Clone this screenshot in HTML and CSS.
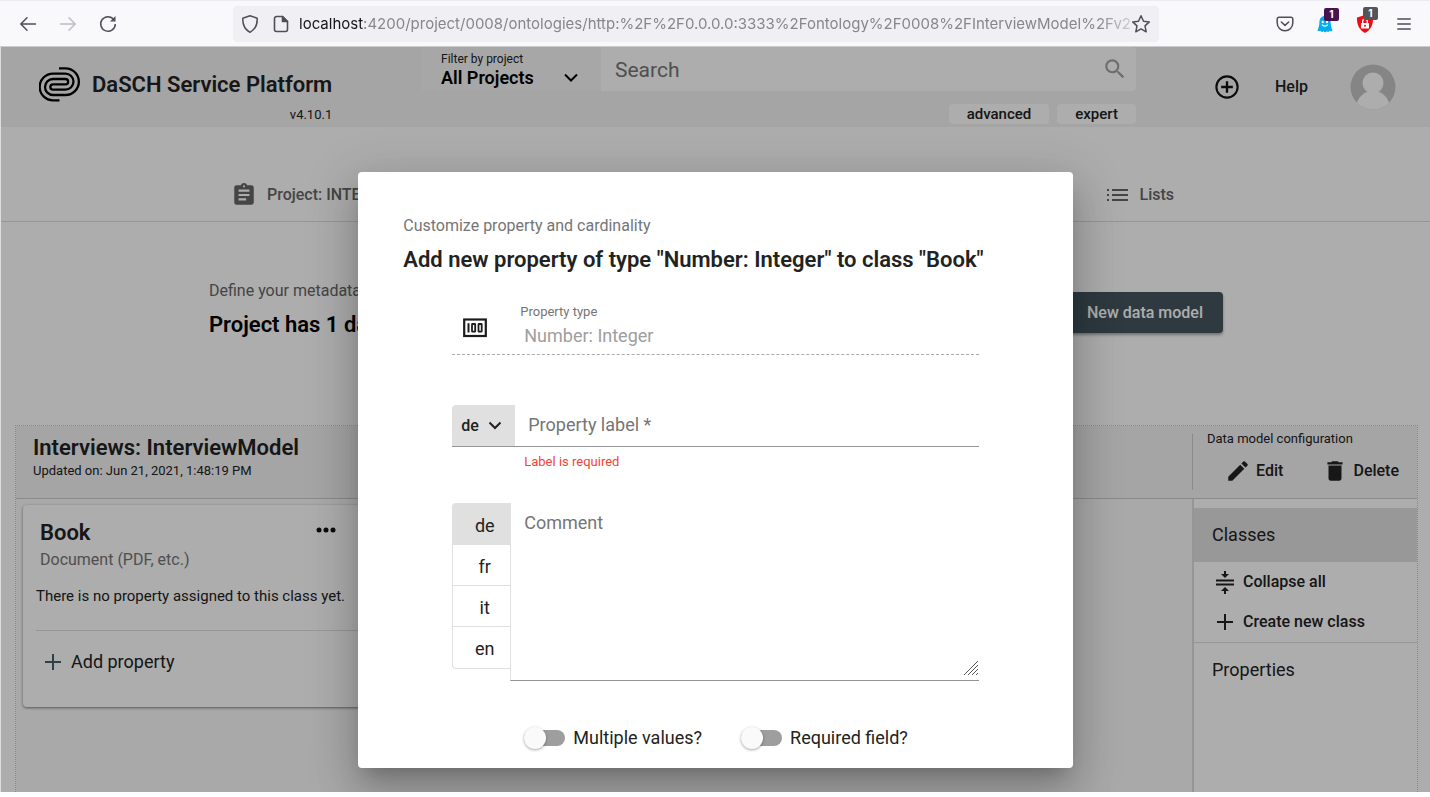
FILE: index.html
```
<!DOCTYPE html>
<html lang="en">
<head>
    <meta charset="UTF-8">
    <meta name="viewport" content="width=device-width, initial-scale=1.0">
    <title>DaSCH Service Platform</title>
    <link rel="stylesheet" href="styles.css">
</head>
<body>

<!-- Browser toolbar -->
<div class="browser">
    <div class="nav-buttons">
        <button class="icon-btn" aria-label="Back">
            <svg width="18" height="18" viewBox="0 0 18 18" fill="none" stroke="#4f4e59" stroke-width="1.5" stroke-linecap="round" stroke-linejoin="round"><path d="M16.500 9H2M8 2.800L1.800 9 8 15.200"/></svg>
        </button>
        <button class="icon-btn" aria-label="Forward">
            <svg width="18" height="18" viewBox="0 0 18 18" fill="none" stroke="#bdbdc2" stroke-width="1.5" stroke-linecap="round" stroke-linejoin="round"><path d="M1.500 9H16M10 2.800L16.200 9 10 15.200"/></svg>
        </button>
        <button class="icon-btn" aria-label="Reload">
            <svg width="18" height="18" viewBox="0 0 18 18" fill="none" stroke="#4f4e59" stroke-width="1.5"><path d="M14.800 4.500A7.300 7.300 0 1 0 16.300 9"/><path d="M16.500 1v5.500H11z" fill="#4f4e59" stroke="none"/></svg>
        </button>
    </div>
    <div class="url-bar">
        <svg width="18" height="20" viewBox="0 0 18 20" fill="none" stroke="#4f4e59" stroke-width="1.500" stroke-linejoin="round"><path d="M9 1.800L16.200 4.200C16.500 10 14 15.500 9 18.300 4 15.500 1.500 10 1.800 4.200z"/></svg>
        <svg width="16" height="18" viewBox="0 0 16 18" fill="none" stroke="#4f4e59" stroke-width="1.600" stroke-linejoin="round"><path d="M3.500 1.500h6l5 5v8a2 2 0 0 1-2 2h-9a2 2 0 0 1-2-2v-11a2 2 0 0 1 2-2z"/><path d="M9.500 1.500v5h5z" fill="#4f4e59"/></svg>
        <p class="url"><span class="host">localhost</span>:4200/project/0008/ontologies/http:%2F%2F0.0.0.0:3333%2Fontology%2F0008%2FInterviewModel%2Fv2</p>
        <button class="icon-btn" aria-label="Bookmark">
            <svg width="20" height="20" viewBox="0 0 20 20" fill="none" stroke="#4f4e59" stroke-width="1.500" stroke-linejoin="round"><path d="M10 1.800l2.500 5.400 5.800.7-4.300 4 1.200 5.900L10 14.900l-5.200 2.900L6 11.900l-4.300-4 5.800-.7z"/></svg>
        </button>
    </div>
    <div class="extensions">
        <button class="icon-btn" aria-label="Pocket">
            <svg width="18" height="16" viewBox="0 0 18 16" fill="none" stroke="#4f4e59" stroke-width="1.500" stroke-linecap="round" stroke-linejoin="round"><path d="M3 1.200h12a1.800 1.800 0 0 1 1.800 1.800v4a7.800 7.800 0 0 1-15.600 0V3A1.800 1.800 0 0 1 3 1.200zM5.300 6L9 9.400 12.700 6"/></svg>
        </button>
        <button class="icon-btn" aria-label="Ghostery">
            <svg width="16" height="18" viewBox="0 0 16 18"><path d="M8 1C4.500 1 2.500 3.500 2.400 7c-.1 4-.9 6-1.900 8.500 1 1 2 .8 2.800 0 .8 1.800 2.300 1.800 3.200.7.900 1.300 2.400 1.300 3.200 0 .9 1.200 2.400 1 3.100-.6.900.7 1.900.8 2.700-.3-1.200-2.400-1.700-4.500-1.900-8.300C13.400 3.500 11.500 1 8 1z" fill="#00aef0"/><circle cx="5.700" cy="7" r="1.200" fill="#fff"/><circle cx="10" cy="7" r="1.200" fill="#fff"/><path d="M5 9.600c1.500 2 4.300 2 5.800 0" fill="none" stroke="#fff" stroke-width="1.200"/></svg>
            <span class="badge purple">1</span>
        </button>
        <button class="icon-btn" aria-label="Ad blocker">
            <svg width="18" height="20" viewBox="0 0 18 20"><path d="M9 1l8 2.600C17.300 10.500 15 16 9 19 3 16 .7 10.500 1 3.600z" fill="#f00c13"/><rect x="5" y="9" width="8" height="5.500" rx=".6" fill="#fff"/><path d="M6.700 9V7.300a2.300 2.300 0 0 1 4.600 0V9" fill="none" stroke="#fff" stroke-width="1.300"/><circle cx="9" cy="11.700" r="1" fill="#f00c13"/></svg>
            <span class="badge grey">1</span>
        </button>
        <button class="icon-btn" aria-label="Menu">
            <svg width="14" height="14" viewBox="0 0 14 14" stroke="#4f4e59" stroke-width="1.500" stroke-linecap="round"><path d="M.8 2h12.400M.8 7h12.400M.8 12h12.400"/></svg>
        </button>
    </div>
</div>

<div class="app">

    <!-- Header -->
    <header class="header">
        <div class="brand">
            <svg class="logo" width="41" height="36" viewBox="0 0 41 36" fill="none" stroke="#000" stroke-width="2.300"><path d="M20 1.300H26.500A13.350 13.350 0 0 1 26.500 28H14A8 8 0 0 1 14 12H26.500A2.650 2.650 0 0 1 26.500 17.300H14"/><path d="M20.500 33.300H14A13.350 13.350 0 0 1 14 6.600H26.500A8 8 0 0 1 26.500 22.600H14A2.650 2.650 0 0 1 14 17.300"/></svg>
            <div class="brand-text">
                <h1>DaSCH Service Platform</h1>
                <p>v4.10.1</p>
            </div>
        </div>
        <div class="search-area">
            <div class="search-row">
                <button class="filter">
                    <span class="filter-text"><small>Filter by project</small><strong>All Projects</strong></span>
                    <svg width="16" height="10" viewBox="0 0 16 10" fill="none" stroke="#000" stroke-width="2"><path d="M2 1.500l6 6 6-6"/></svg>
                </button>
                <div class="search-box">
                    <input type="text" placeholder="Search" aria-label="Search">
                    <button class="icon-btn" aria-label="Search">
                        <svg width="26" height="26" viewBox="0 0 24 24" fill="#a3a3a3"><path d="M15.500 14h-.79l-.28-.27A6.470 6.470 0 0 0 16 9.500 6.500 6.500 0 1 0 9.500 16c1.610 0 3.090-.59 4.230-1.570l.27.28v.79l5 4.990L20.490 19l-4.990-5zm-6 0C7.010 14 5 11.990 5 9.500S7.010 5 9.500 5 14 7.010 14 9.500 11.990 14 9.500 14z"/></svg>
                    </button>
                </div>
            </div>
            <div class="search-modes">
                <button>advanced</button>
                <button>expert</button>
            </div>
        </div>
        <div class="header-actions">
            <button class="icon-btn" aria-label="Add">
                <svg width="28" height="28" viewBox="0 0 24 24" fill="#111"><path d="M13 7h-2v4H7v2h4v4h2v-4h4v-2h-4V7zm-1-5a10 10 0 1 0 0 20 10 10 0 0 0 0-20zm0 18.200a8.200 8.200 0 1 1 0-16.400 8.200 8.200 0 0 1 0 16.400z"/></svg>
            </button>
            <a class="help" href="#">Help</a>
            <button class="icon-btn" aria-label="Account">
                <svg width="46" height="46" viewBox="0 0 46 46"><defs><clipPath id="avatar"><circle cx="23" cy="23" r="22.500"/></clipPath></defs><g clip-path="url(#avatar)"><path fill="#c4c4c4" d="M0 0h46v46H0z"/><circle cx="23" cy="19" r="10.500" fill="#fff"/><path d="M6 42c2-9 8-15 17-15s15 6 17 15l-5 6H11z" fill="#fff"/></g></svg>
            </button>
        </div>
    </header>

    <!-- Project tabs -->
    <nav class="tabs">
        <a href="#">
            <svg width="26" height="26" viewBox="0 0 24 24" fill="#666"><path d="M19 3h-4.180C14.400 1.840 13.300 1 12 1s-2.400.84-2.820 2H5c-1.100 0-2 .9-2 2v14c0 1.100.9 2 2 2h14c1.100 0 2-.9 2-2V5c0-1.100-.9-2-2-2zm-7 0c.55 0 1 .45 1 1s-.45 1-1 1-1-.45-1-1 .45-1 1-1zm2 14H7v-2h7v2zm3-4H7v-2h10v2zm0-4H7V7h10v2z"/></svg>
            Project: INTERVIEWS
        </a>
        <a href="#">
            <svg width="22" height="14" viewBox="0 0 22 14" fill="#666"><path d="M0 1h2v2H0zM0 6h2v2H0zM0 11h2v2H0zM5 1h16v2H5zM5 6h16v2H5zM5 11h16v2H5z"/></svg>
            Lists
        </a>
    </nav>

    <section class="intro">
        <div>
            <p>Define your metadata</p>
            <h2>Project has 1 data model</h2>
        </div>
        <button class="primary">New data model</button>
    </section>

    <!-- Data model editor -->
    <main class="editor">
        <div class="editor-header">
            <div class="model-title">
                <h3>Interviews: InterviewModel</h3>
                <p>Updated on: Jun 21, 2021, 1:48:19 PM</p>
            </div>
            <div class="model-config">
                <p>Data model configuration</p>
                <div class="config-buttons">
                    <button>
                        <svg width="26" height="26" viewBox="0 0 24 24" fill="#222"><path d="M3 17.250V21h3.750L17.810 9.940l-3.750-3.750L3 17.250zM20.710 7.040a1 1 0 0 0 0-1.410l-2.340-2.340a1 1 0 0 0-1.410 0l-1.830 1.830 3.750 3.750 1.830-1.830z"/></svg>
                        Edit
                    </button>
                    <button>
                        <svg width="26" height="26" viewBox="0 0 24 24" fill="#222"><path d="M6 19c0 1.100.9 2 2 2h8c1.100 0 2-.9 2-2V7H6v12zM19 4h-3.500l-1-1h-5l-1 1H5v2h14V4z"/></svg>
                        Delete
                    </button>
                </div>
            </div>
        </div>
        <div class="editor-body">
            <div class="canvas">
                <article class="class-card">
                    <div class="card-head">
                        <div>
                            <h3>Book</h3>
                            <p>Document (PDF, etc.)</p>
                        </div>
                        <button class="icon-btn" aria-label="More">
                            <svg width="20" height="6" viewBox="0 0 20 6" fill="#111"><circle cx="3" cy="3" r="2.500"/><circle cx="10" cy="3" r="2.500"/><circle cx="17" cy="3" r="2.500"/></svg>
                        </button>
                    </div>
                    <p class="empty">There is no property assigned to this class yet.</p>
                    <button class="add-property">
                        <svg width="18" height="18" viewBox="0 0 18 18" stroke="#44606e" stroke-width="2"><path d="M9 1v16M1 9h16"/></svg>
                        Add property
                    </button>
                </article>
            </div>
            <aside class="sidebar">
                <h4 class="active">Classes</h4>
                <button>
                    <svg width="22" height="24" viewBox="0 0 22 24" fill="#222"><path d="M2 9.500h18v2H2zM2 13.500h18v2H2zM10 1h2v3h3l-4 4-4-4h3zM10 24h2v-3h3l-4-4-4 4h3z"/></svg>
                    Collapse all
                </button>
                <button>
                    <svg width="22" height="24" viewBox="0 0 22 24" stroke="#222" stroke-width="2"><path d="M11 4v16M3 12h16"/></svg>
                    Create new class
                </button>
                <h4 class="properties">Properties</h4>
            </aside>
        </div>
    </main>

    <!-- Add property dialog -->
    <div class="backdrop">
        <form class="dialog" role="dialog" aria-labelledby="dialog-title">
            <p class="subtitle">Customize property and cardinality</p>
            <h2 id="dialog-title">Add new property of type "Number: Integer" to class "Book"</h2>

            <div class="fields">
                <div class="type-field">
                    <svg width="24" height="20" viewBox="0 0 24 20" fill="none" stroke="#1c1c1c"><rect x="1.200" y="1.500" width="21.600" height="16.500" stroke-width="2.200"/><path d="M5.500 5.200v9.300" stroke-width="2"/><rect x="9" y="6" width="3.200" height="7.700" rx=".5" stroke-width="1.800"/><rect x="15.500" y="6" width="3.200" height="7.700" rx=".5" stroke-width="1.800"/></svg>
                    <div class="type-value">
                        <label for="prop-type">Property type</label>
                        <input type="text" id="prop-type" value="Number: Integer" disabled>
                    </div>
                </div>

                <div class="label-field">
                    <button type="button" class="lang">de
                        <svg width="14" height="9" viewBox="0 0 14 9" fill="none" stroke="#222" stroke-width="2"><path d="M1.500 1.500L7 7l5.500-5.500"/></svg>
                    </button>
                    <input type="text" placeholder="Property label *" aria-label="Property label">
                </div>
                <p class="error">Label is required</p>

                <div class="comment-field">
                    <div class="lang-list">
                        <button type="button" class="selected">de</button>
                        <button type="button">fr</button>
                        <button type="button">it</button>
                        <button type="button">en</button>
                    </div>
                    <div class="comment-box">
                        <textarea placeholder="Comment" aria-label="Comment"></textarea>
                        <svg class="grip" width="16" height="16" viewBox="0 0 16 16" stroke="#555" stroke-width="1"><path d="M1 15L15 1M5 15L15 5M9 15l6-6M13 15l2-2"/></svg>
                    </div>
                </div>

                <div class="toggles">
                    <label><input type="checkbox">Multiple values?</label>
                    <label><input type="checkbox">Required field?</label>
                </div>
            </div>
        </form>
    </div>
</div>

</body>
</html>
```
FILE: styles.css
```
* {
    box-sizing: border-box;
}
body {
    margin: 0;
    height: 100vh;
    padding-bottom: 5px;
    display: flex;
    flex-direction: column;
    font-family: Roboto, sans-serif;
    font-size: 16px;
    line-height: 20px;
    color: #222;
    background: #fff;
    overflow: hidden;
}
h1, h2, h3, h4, p {
    margin: 0;
    font-weight: 600;
}
p {
    font-weight: 400;
}
button, input, textarea {
    font: inherit;
    color: inherit;
    border: none;
    background: none;
    padding: 0;
}
a {
    color: inherit;
    text-decoration: none;
}
svg {
    display: block;
    flex: none;
}
.icon-btn {
    position: relative;
}

/* browser toolbar */
.browser {
    display: flex;
    align-items: center;
    height: 47px;
    padding: 0 19px;
    background: #f9f9fb;
    border-top: 1px solid #ececf0;
    border-bottom: 1px solid #ccc;
}
.nav-buttons {
    display: flex;
    flex: none;
    gap: 22px;
    width: 214px;
}
.url-bar {
    display: flex;
    align-items: center;
    flex: 1;
    min-width: 0;
    height: 36px;
    padding: 0 8px;
    background: #f0f0f4;
    border-radius: 4px;
}
.url-bar svg + svg {
    margin: 0 10px 0 14px;
}
.url {
    flex: 1;
    min-width: 0;
    overflow: hidden;
    white-space: nowrap;
    font-family: Inter, sans-serif;
    font-size: 15px;
    color: #86868b;
    mask-image: linear-gradient(to right, #000 96%, rgba(0, 0, 0, .3));
}
.host {
    color: #15141a;
}
.extensions {
    display: flex;
    flex: none;
    align-items: center;
    justify-content: flex-end;
    gap: 23px;
    width: 252px;
}
.badge {
    position: absolute;
    top: -7px;
    left: 7px;
    width: 15px;
    height: 13px;
    border-radius: 2px;
    color: #fff;
    font: bold 10px/13px Inter, sans-serif;
    text-align: center;
}
.purple {
    background: #45134f;
}
.grey {
    background: #555;
}

/* application */
.app {
    position: relative;
    flex: 1;
    min-height: 0;
    display: flex;
    flex-direction: column;
    background: #fff;
    border-left: 1px solid #ddd;
    overflow: hidden;
}
.header {
    display: flex;
    height: 80px;
    flex: none;
    background: #f4f4f4;
}
.brand {
    display: flex;
    gap: 12px;
    padding: 20px 0 0 38px;
    width: 420px;
}
.brand-text h1 {
    font-size: 22px;
    line-height: 35px;
}
.brand-text p {
    font-size: 13px;
    line-height: 26px;
    text-align: right;
}
.search-area {
    flex: 1;
}
.search-row {
    display: flex;
    height: 44px;
}
.filter {
    display: flex;
    justify-content: space-between;
    align-items: center;
    width: 180px;
    padding: 4px 22px 0 20px;
    text-align: left;
    background: #f7f7f7;
    border-radius: 4px;
}
.filter svg {
    margin-top: 14px;
}
.filter small {
    display: block;
    font-size: 12px;
    line-height: 14px;
}
.filter strong {
    display: block;
    font-size: 18px;
    font-weight: 600;
    line-height: 24px;
    color: #000;
}
.search-box {
    display: flex;
    flex: 1;
    align-items: center;
    padding: 0 8px 0 14px;
    background: #fff;
    border-radius: 0 4px 4px 0;
}
.search-box input {
    flex: 1;
    padding-top: 2px;
    font-size: 21px;
}
::placeholder {
    color: #757575;
    opacity: 1;
}
.search-modes {
    display: flex;
    justify-content: flex-end;
    gap: 8px;
    padding-top: 13px;
}
.search-modes button {
    height: 20px;
    padding: 0 18px;
    font-size: 15px;
    font-weight: 500;
    background: #fff;
    border-radius: 4px;
}
.header-actions {
    display: flex;
    align-items: center;
    justify-content: flex-end;
    gap: 34px;
    width: 294px;
    padding-right: 34px;
}
.help {
    font-weight: 500;
    padding-right: 8px;
}
.tabs {
    display: flex;
    justify-content: space-between;
    align-items: center;
    flex: none;
    height: 95px;
    padding: 41px 256px 0 230px;
    color: #666;
    font-weight: 500;
    background: #fff;
    border-bottom: 1px solid #ddd;
}
.tabs a {
    display: flex;
    align-items: center;
    gap: 10px;
}
.intro {
    display: flex;
    justify-content: space-between;
    align-items: center;
    flex: none;
    height: 203px;
    padding: 0 207px 22px 208px;
    background: #fff;
}
.intro p {
    color: #666;
    line-height: 24px;
}
.intro h2 {
    font-size: 22px;
    line-height: 43px;
    color: #000;
}
.primary {
    height: 41px;
    padding: 0 20px;
    font-weight: 500;
    color: #fff;
    background: #44565f;
    border-radius: 4px;
    box-shadow: 0 2px 3px rgba(0, 0, 0, .35);
}

/* editor */
.editor {
    display: flex;
    flex-direction: column;
    flex: 1;
    min-height: 0;
    margin: 0 12px 0 14px;
    border: 1px dotted #ccc;
    border-bottom: none;
}
.editor-header {
    display: flex;
    justify-content: space-between;
    height: 73px;
    background: #f4f4f4;
    border-bottom: 1px solid #ccc;
}
.model-title {
    padding: 9px 17px;
}
.model-title h3 {
    font-size: 22px;
    line-height: 26px;
}
.model-title p {
    font-size: 13px;
}
.model-config {
    width: 225px;
    margin: 8px 0;
    padding: 0 18px 0 14px;
    border-left: 1px solid #ccc;
    font-size: 13px;
    line-height: 10px;
}
.config-buttons {
    display: flex;
    justify-content: space-between;
    padding: 14px 0 0 18px;
    font-size: 16px;
}
.config-buttons button {
    display: flex;
    align-items: center;
    gap: 5px;
    font-weight: 500;
}
.editor-body {
    display: flex;
    flex: 1;
}
.canvas {
    flex: 1;
    padding: 6px 7px;
    background: #fafafa;
}
.class-card {
    width: 364px;
    height: 202px;
    padding: 14px 13px;
    background: #fff;
    border-radius: 4px;
    box-shadow: 0 1px 3px rgba(0, 0, 0, .5);
}
.card-head {
    display: flex;
    justify-content: space-between;
    align-items: flex-start;
    padding: 0 38px 0 4px;
}
.card-head h3 {
    font-size: 22px;
    line-height: 28px;
}
.card-head p {
    color: #757575;
    line-height: 26px;
}
.card-head .icon-btn {
    padding-top: 8px;
}
.empty {
    padding: 13px 0 24px;
    font-size: 15px;
    line-height: 20px;
    border-bottom: 1px solid #ddd;
    white-space: nowrap;
}
.add-property {
    display: flex;
    align-items: center;
    gap: 9px;
    padding: 21px 8px;
    font-size: 18px;
}
.sidebar {
    width: 225px;
    padding-top: 9px;
    border-left: 2px solid #ddd;
    background: #fff;
}
.sidebar h4 {
    padding: 0 18px;
    font-size: 18px;
    font-weight: 400;
    line-height: 54px;
}
.sidebar .active {
    background: #e0e0e0;
}
.sidebar .properties {
    border-top: 1px solid #ddd;
}
.sidebar button {
    display: flex;
    align-items: center;
    gap: 7px;
    width: 100%;
    height: 40px;
    padding-left: 20px;
    font-weight: 500;
}

/* dialog */
.backdrop {
    position: absolute;
    inset: 0;
    display: flex;
    justify-content: center;
    align-items: flex-start;
    padding-top: 125px;
    background: rgba(0, 0, 0, .32);
}
.dialog {
    width: 50%;
    min-width: 640px;
    padding: 42px 45px 20px;
    background: #fff;
    border-radius: 4px;
    box-shadow: 0 12px 17px -8px rgba(0, 0, 0, .2), 0 26px 42px 3px rgba(0, 0, 0, .14), 0 10px 50px 9px rgba(0, 0, 0, .12);
}
.subtitle {
    color: #757575;
    line-height: 24px;
}
.dialog h2 {
    font-size: 22px;
    line-height: 43px;
    white-space: nowrap;
}
.fields {
    padding: 21px 49px 0;
}
.type-field {
    display: flex;
    align-items: center;
    gap: 33px;
    height: 53px;
    padding: 0 11px;
    border-bottom: 1px dashed #aaa;
}
.type-value {
    padding-bottom: 5px;
}
.type-field label {
    display: block;
    font-size: 13px;
    color: #757575;
}
.type-field input {
    display: block;
    height: 28px;
    padding-left: 4px;
    font-size: 18px;
    color: #9e9e9e;
}
.label-field {
    display: flex;
    height: 42px;
    margin-top: 50px;
    border-bottom: 1px solid #949494;
}
.lang {
    display: flex;
    align-items: center;
    gap: 9px;
    width: 63px;
    padding-left: 9px;
    font-weight: 500;
    background: #e0e0e0;
    border-radius: 4px 0 0 0;
}
.label-field input {
    flex: 1;
    padding: 0 13px 2px;
    font-size: 18px;
}
.error {
    padding: 5px 72px;
    font-size: 13px;
    color: #f44336;
}
.comment-field {
    display: flex;
    align-items: flex-start;
    margin-top: 26px;
}
.lang-list {
    width: 58px;
    border: 1px solid #e0e0e0;
    border-right: none;
    border-radius: 4px 0 0 4px;
}
.lang-list button {
    display: block;
    width: 100%;
    height: 41px;
    padding: 3px 0 0 6px;
    font-size: 18px;
    border-bottom: 1px solid #e0e0e0;
}
.lang-list button:last-child {
    border-bottom: none;
}
.lang-list .selected {
    background: #e0e0e0;
}
.comment-box {
    position: relative;
    flex: 1;
    border-left: 1px solid #e0e0e0;
    border-bottom: 1px solid #949494;
}
.comment-box textarea {
    display: block;
    width: 100%;
    height: 177px;
    padding: 10px 13px;
    font-size: 18px;
    resize: none;
    outline: none;
}
.grip {
    position: absolute;
    right: 0;
    bottom: 4px;
}
.toggles {
    display: flex;
    gap: 39px;
    padding: 47px 0 0 72px;
    font-size: 18px;
    white-space: nowrap;
}
.toggles label {
    display: flex;
    align-items: center;
    gap: 8px;
}
.toggles input {
    appearance: none;
    position: relative;
    flex: none;
    width: 41px;
    height: 16px;
    margin: 0;
    border-radius: 8px;
    background: #9e9e9e;
}
.toggles input::before {
    content: "";
    position: absolute;
    top: -3px;
    left: 0;
    width: 22px;
    height: 22px;
    border-radius: 50%;
    background: #fafafa;
    box-shadow: 0 1px 3px rgba(0, 0, 0, .35);
}
```
